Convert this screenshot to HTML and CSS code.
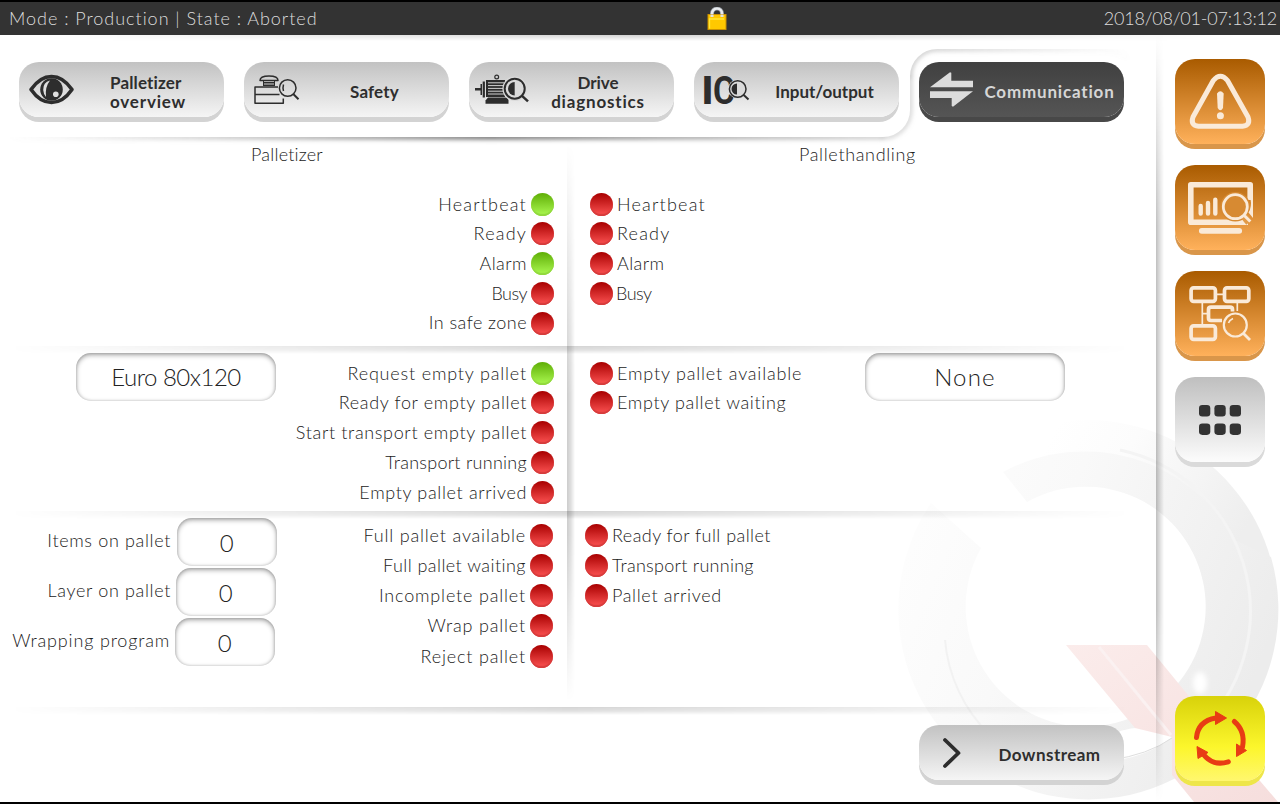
FILE: index.html
```html
<!DOCTYPE html>
<html lang="en">
<head>
<meta charset="utf-8">
<title>Palletizer – Communication</title>
<link rel="stylesheet" href="styles.css">
</head>
<body>
<div class="screen">
  <header class="status">
    <span class="status-mode">Mode : Production | State : Aborted</span>
    <svg class="lock" width="20" height="24" viewBox="0 0 20 24">
      <path d="M5 10V6.500a5 5 0 0 1 10 0V10" fill="none" stroke="#8a8f96" stroke-width="4"/>
      <path d="M5 10V6.500a5 5 0 0 1 10 0V10" fill="none" stroke="#e8ebee" stroke-width="2.600"/>
      <rect x=".5" y="7" width="19" height="16" fill="#c98f00"/>
      <rect x="1.500" y="8" width="17" height="14" fill="#ffc800"/>
      <path d="M2.500 21.500V12H17" fill="none" stroke="#ffe83a" stroke-width="1.300"/>
      <path d="M5 10V7.500M15 10V7.500" stroke="#dfe3e6" stroke-width="3"/>
    </svg>
    <time class="status-time">2018/08/01-07:13:12</time>
  </header>

  <svg class="watermark" viewBox="890 410 390 392" width="390" height="392">
    <defs>
      <linearGradient id="ring" gradientUnits="userSpaceOnUse" x1="930" y1="500" x2="1270" y2="640">
        <stop offset="0" stop-color="#fdfdfd"/><stop offset=".35" stop-color="#f9f9f9"/><stop offset="1" stop-color="#ececec"/>
      </linearGradient>
      <linearGradient id="halo" gradientUnits="userSpaceOnUse" x1="1060" y1="420" x2="1250" y2="520">
        <stop offset="0" stop-color="#fff"/><stop offset=".35" stop-color="#fcfcfc"/><stop offset="1" stop-color="#eee"/>
      </linearGradient>
      <linearGradient id="tail" x1="0" y1="0" x2="1" y2="1">
        <stop offset="0" stop-color="#fbeceb"/><stop offset="1" stop-color="#f6dedd"/>
      </linearGradient>
      <filter id="glow" x="-50%" y="-50%" width="200%" height="200%"><feGaussianBlur stdDeviation="2.500"/></filter>
    </defs>
    <path d="M1005 439A190 190 0 0 1 1271 560L1203 580A120 120 0 0 0 1027 502Z" fill="url(#halo)"/>
    <path d="M1003 472A172 172 0 0 1 1235 540L1271 557A190 190 0 1 1 931 503L981 548A120 120 0 1 0 1027 502Z" fill="url(#ring)"/>
    <path d="M1120 450A165 165 0 0 1 1205 725" fill="none" stroke="#f4f4f4" stroke-width="3"/>
    <path d="M945 640A150 150 0 0 0 990 735" fill="none" stroke="#f2f2f2" stroke-width="2"/>
    <path d="M1120 731Q1150 722 1172 737Q1150 755 1118 760Z" fill="#fff"/>
    <path d="M1110 760Q1148 755 1172 738" fill="none" stroke="#dedede"/>
    <ellipse cx="1200" cy="683" rx="7" ry="11" fill="#fff" filter="url(#glow)"/>
    <path d="M1066 645H1147L1215 728L1278 802H1194L1172 775V737L1135 728Z" fill="url(#tail)"/>
    <path d="M1099 647L1171 735" stroke="#fbf1f1" stroke-width="3"/>
  </svg>

  <div class="body">
    <main class="content">
      <svg class="tabline" width="1156" height="120" viewBox="0 35 1156 120">
        <defs>
          <linearGradient id="fadeL" gradientUnits="userSpaceOnUse" x1="10" y1="0" x2="884" y2="0">
            <stop offset="0" stop-color="#999" stop-opacity="0"/><stop offset=".55" stop-color="#666" stop-opacity=".95"/><stop offset="1" stop-color="#999" stop-opacity=".45"/>
          </linearGradient>
          <linearGradient id="fadeR" gradientUnits="userSpaceOnUse" x1="905" y1="0" x2="1130" y2="0">
            <stop offset="0" stop-color="#999" stop-opacity=".5"/><stop offset="1" stop-color="#999" stop-opacity="0"/>
          </linearGradient>
          <filter id="soft" filterUnits="userSpaceOnUse" x="0" y="30" width="1156" height="130"><feGaussianBlur stdDeviation="2"/></filter>
          <clipPath id="under"><path d="M0 137H883A27 27 0 0 0 910 110V76A27 27 0 0 1 937 49H1156V160H0Z"/></clipPath>
        </defs>
        <g clip-path="url(#under)">
          <g fill="none" stroke-width="5" filter="url(#soft)">
            <path d="M10 137H883V137.010" stroke="url(#fadeL)"/>
            <path d="M881 137A27 27 0 0 0 910 110V76" stroke="#aaa" stroke-opacity=".45"/>
            <path d="M910 78A27 27 0 0 1 937 49H1100Q1125 50 1134 66" stroke="url(#fadeR)"/>
          </g>
        </g>
      </svg>

      <nav class="tabs">
        <button class="btn"><svg class="ico" width="56" height="55" viewBox="0 0 56 55">
          <path d="M12 27.500Q21 14.500 32.500 14.500T53 27.500Q44 40.500 32.500 40.500T12 27.500Z" fill="none" stroke="#2d2d2d" stroke-width="3.600" stroke-linejoin="round"/>
          <circle cx="32.500" cy="27.500" r="11.300" fill="#2d2d2d"/>
          <path d="M31 18.500Q24 20 24.200 28Q24.400 32 27 35Q25.800 25 31 18.500Z" fill="#dedede"/>
          <circle cx="36.800" cy="32.300" r="2.800" fill="#dedede"/></svg>
          <span class="cap cap-left">Palletizer<br><span class="sp-l">overview</span></span></button>
        <button class="btn"><svg class="ico" width="56" height="55" viewBox="0 0 56 55" fill="none" stroke="#2d2d2d" stroke-width="1.500">
          <path d="M16 18.500Q16 14 25 14T34 18.500Z" stroke-linejoin="round"/>
          <path d="M19.500 19V24M30.500 19V24" stroke-width="1"/><path d="M19 20.800H31M20 23.300H30" stroke-width="1.500"/>
          <path d="M34 25H11V32.500H35.500M11 32.500V41.300H39.300V36.500" stroke-linejoin="round"/>
          <circle cx="43.700" cy="26" r="8.300"/><path d="M39.500 22.500Q38.500 26 39.500 29"/>
          <path d="M49.500 32.300L54.500 37.300" stroke-width="2"/></svg>
          <span class="cap sp-xs">Safety</span></button>
        <button class="btn"><svg class="ico" width="56" height="55" viewBox="0 0 56 55">
          <g fill="#2d2d2d"><rect x="6" y="26" width="7" height="2.500"/><rect x="11.500" y="22" width="1.500" height="11"/><rect x="13.700" y="19.500" width="2.200" height="16"/>
          <path d="M17 18H36V35H17Z"/><path d="M19 35.500H38L39.500 38V41.700H16.500V38.500Z"/></g>
          <path d="M19 20.800H35M19 23.600H35M19 26.400H35M19 29.200H35M19 32H35" stroke="#d2d2d2" stroke-width="1"/>
          <circle cx="27.700" cy="15" r="1.900" fill="none" stroke="#2d2d2d" stroke-width="1.200"/>
          <circle cx="45.700" cy="26.700" r="12.300" fill="#dadada"/>
          <circle cx="45.700" cy="26.700" r="10" fill="none" stroke="#2d2d2d" stroke-width="2"/>
          <path d="M45.700 20A6.700 6.700 0 0 0 45.700 33.400Z" fill="#2d2d2d"/>
          <path d="M53 33.800L59 39.300" stroke="#2d2d2d" stroke-width="2.500"/></svg>
          <span class="cap cap-drive">Drive<br><span class="sp-l">diagnostics</span></span></button>
        <button class="btn"><svg class="ico" width="56" height="55" viewBox="0 0 56 55">
          <g class="io"><text x="7" y="41.700" textLength="13" lengthAdjust="spacingAndGlyphs">I</text><text x="19" y="41.700" textLength="22" lengthAdjust="spacingAndGlyphs">C</text></g>
          <circle cx="43.700" cy="27" r="9.700" fill="#dadada"/>
          <circle cx="43.700" cy="27" r="8.300" fill="none" stroke="#2d2d2d" stroke-width="1.500"/>
          <path d="M43 21.500A5.500 5.500 0 0 0 43 32.500Z" fill="#2d2d2d"/>
          <path d="M49.700 33L54.500 37.500" stroke="#2d2d2d" stroke-width="2"/></svg>
          <span class="cap">Input/output</span></button>
        <button class="btn btn-active"><svg class="ico" width="56" height="55" viewBox="0 0 56 55" fill="#dcdcdc">
          <path d="M11 25.300L31 10.200L32.300 10.700V18.700H54V25.300Z"/><path d="M11 29.200H54L34 44.800L32.700 44V36H11Z"/></svg>
          <span class="cap sp-l">Communication</span></button>
      </nav>

      <section class="zone zone-state">
        <div class="half half-left">
          <h2 class="title sp-xs">Palletizer</h2>
          <ul class="leds leds-left">
            <li><span class="sp-xl">Heartbeat</span><i class="led led-on"></i></li>
            <li><span class="sp-xl">Ready</span><i class="led"></i></li>
            <li><span class="sp-m">Alarm</span><i class="led led-on"></i></li>
            <li><span class="sp-neg">Busy</span><i class="led"></i></li>
            <li class="raised"><span class="sp-m">In safe zone</span><i class="led"></i></li>
          </ul>
        </div>
        <div class="half half-right">
          <h2 class="title">Pallethandling</h2>
          <ul class="leds">
            <li><i class="led"></i><span class="sp-xl">Heartbeat</span></li>
            <li><i class="led"></i><span class="sp-xl">Ready</span></li>
            <li><i class="led"></i><span class="sp-m">Alarm</span></li>
            <li class="tight"><i class="led"></i><span class="sp-neg">Busy</span></li>
          </ul>
        </div>
      </section>

      <section class="zone zone-empty ruled">
        <div class="half half-left">
          <div class="field sp-neg">Euro 80x120</div>
          <ul class="leds leds-left">
            <li><span class="sp-l">Request empty pallet</span><i class="led led-on"></i></li>
            <li><span>Ready for empty pallet</span><i class="led"></i></li>
            <li><span>Start transport empty pallet</span><i class="led"></i></li>
            <li><span class="sp-s">Transport running</span><i class="led"></i></li>
            <li><span>Empty pallet arrived</span><i class="led"></i></li>
          </ul>
        </div>
        <div class="half half-right">
          <ul class="leds">
            <li><i class="led"></i><span class="sp-l">Empty pallet available</span></li>
            <li><i class="led"></i><span>Empty pallet waiting</span></li>
          </ul>
          <div class="field sp-xl">None</div>
        </div>
      </section>

      <section class="zone zone-full ruled">
        <div class="half half-left">
          <div class="counts">
            <label class="count count-a"><span>Items on pallet</span><output class="field">0</output></label>
            <label class="count count-b"><span>Layer on pallet</span><output class="field">0</output></label>
            <label class="count count-c"><span class="sp-l">Wrapping program</span><output class="field">0</output></label>
          </div>
          <ul class="leds leds-left">
            <li><span class="sp-l">Full pallet available</span><i class="led"></i></li>
            <li><span class="sp-m">Full pallet waiting</span><i class="led"></i></li>
            <li><span class="sp-l">Incomplete pallet</span><i class="led"></i></li>
            <li><span class="sp-l">Wrap pallet</span><i class="led"></i></li>
            <li><span class="sp-l">Reject pallet</span><i class="led"></i></li>
          </ul>
        </div>
        <div class="half half-right">
          <ul class="leds">
            <li><i class="led"></i><span class="sp-m">Ready for full pallet</span></li>
            <li><i class="led"></i><span class="sp-s">Transport running</span></li>
            <li><i class="led"></i><span>Pallet arrived</span></li>
          </ul>
        </div>
      </section>

      <footer class="foot ruled">
        <button class="btn"><svg class="ico" width="56" height="55" viewBox="0 0 56 55">
          <path d="M26 15L39.500 28L26 41" fill="none" stroke="#2d2d2d" stroke-width="3.800" stroke-linecap="round" stroke-linejoin="round"/></svg>
          <span class="cap sp-m">Downstream</span></button>
      </footer>
    </main>

    <aside class="side">
      <button class="tile tile-orange"><svg width="90" height="85" viewBox="0 0 90 85">
        <path d="M38.300 21.500Q45.400 13 52.500 21.500L73 58Q76 66.500 67.500 67.200H23.500Q15 66.500 18 58Z" fill="none" stroke="#faead8" stroke-width="5" stroke-linejoin="round"/>
        <path d="M42 34.500Q45.400 30 48.700 34.500L48 49Q45.400 53.500 42.700 49Z" fill="#faead8"/><circle cx="45.400" cy="56.700" r="3.500" fill="#faead8"/></svg></button>
      <button class="tile tile-orange"><svg width="90" height="85" viewBox="0 0 90 85">
        <path d="M75.200 35V19.800H15.800V57.200H73" fill="none" stroke="#faead8" stroke-width="5.600" stroke-linejoin="round"/>
        <circle cx="60.300" cy="41.700" r="14.800" fill="#d78a32"/>
        <path d="M75.500 34Q77 42 73.500 47.500L78 53V34Z" fill="#faead8"/>
        <path d="M25.700 41V48.500M33 38V48.500M40.300 34.700V48.500" stroke="#faead8" stroke-width="4.400" stroke-linecap="round"/>
        <path d="M26.800 65.800H64.200" stroke="#faead8" stroke-width="5.800" stroke-linecap="round"/>
        <path d="M68 50L74 57.500" stroke="#e29a46" stroke-width="7"/>
        <circle cx="60.300" cy="41.700" r="12" fill="none" stroke="#faead8" stroke-width="2.800"/>
        <path d="M69.500 50.800L75.300 56.500" stroke="#faead8" stroke-width="3"/></svg></button>
      <button class="tile tile-orange"><svg width="90" height="85" viewBox="0 0 90 85" fill="none" stroke="#faead8">
        <g stroke-width="3.700"><rect x="16.100" y="16.900" width="24.300" height="13.400" rx="2.500"/><rect x="49.500" y="16.900" width="24.300" height="13.400" rx="2.500"/>
        <path d="M57.500 40.500V38.500Q57.500 36.200 55 36.200H36Q33.500 36.200 33.500 38.500V47Q33.500 49.500 36 49.500H47"/>
        <rect x="16.100" y="54.900" width="24.300" height="13.400" rx="2.500"/></g>
        <path d="M42 23.300H48M27.300 32V53M62.300 32V40M27.300 42.700H32" stroke-width="1.700"/>
        <circle cx="60.300" cy="54" r="11.500" stroke-width="2.200"/><path d="M53.500 52Q54.500 49 58 47.500" stroke-width="1.600"/>
        <path d="M68.500 62.500L75 69" stroke-width="2.800"/></svg></button>
      <button class="tile tile-gray"><svg width="90" height="85" viewBox="0 0 90 85" fill="#333">
        <rect x="24" y="28" width="11.300" height="11.500" rx="3.300"/><rect x="39.400" y="28" width="11.300" height="11.500" rx="3.300"/><rect x="54.700" y="28" width="11.300" height="11.500" rx="3.300"/>
        <rect x="24" y="46.400" width="11.300" height="11.500" rx="3.300"/><rect x="39.400" y="46.400" width="11.300" height="11.500" rx="3.300"/><rect x="54.700" y="46.400" width="11.300" height="11.500" rx="3.300"/></svg></button>
      <button class="tile tile-yellow"><svg width="90" height="85" viewBox="0 0 90 85">
        <g fill="none" stroke="#e83c14" stroke-width="5" stroke-linecap="round"><path d="M21.500 41.500Q23 25 41 22"/><path d="M59.300 25.500Q70.500 35 67.500 51"/><path d="M53.300 65.800Q38 70.500 28.500 58.500"/></g>
        <g fill="#e83c14" stroke="#e83c14" stroke-linejoin="round"><path d="M40.500 15.500L51.500 22L40.500 28.500Z"/><path d="M61.500 48L71.500 54.500L61.500 60.500Z"/><path d="M22 50.500L33 56.500L23 62.500Z"/></g></svg></button>
    </aside>
  </div>
</div>
</body>
</html>
```
FILE: styles.css
```css
* { box-sizing: border-box; }
body {
  margin: 0;
  background: #fff;
  color: #222;
  font: 300 18px/23px Lato, "Liberation Sans", sans-serif;
  letter-spacing: .65px;
}
.screen {
  position: relative;
  width: 1280px;
  height: 804px;
  overflow: hidden;
  border-top: 2px solid #000;
  border-bottom: 2px solid #000;
  display: flex;
  flex-direction: column;
}
.status {
  height: 33px;
  flex: none;
  background: #333;
  color: #dcdcdc;
  display: grid;
  grid-template-columns: 698px 20px 1fr;
  align-items: center;
  padding: 0 3px 0 9px;
}
.status-mode { letter-spacing: .97px; }
.status-time { text-align: right; letter-spacing: -.2px; }
.watermark { position: absolute; right: 0; bottom: 0; }
.body {
  position: relative;
  flex: 1;
  display: flex;
}
.body::before {
  content: "";
  position: absolute;
  inset: 0 0 auto 0;
  height: 6px;
  background: linear-gradient(rgba(0,0,0,.18), rgba(0,0,0,0));
  mask-image: linear-gradient(90deg, transparent 3%, #000 50%, transparent 97%);
}
.content {
  position: relative;
  width: 1156px;
  display: flex;
  flex-direction: column;
}
.content::before {
  content: "";
  position: absolute;
  left: 567px;
  top: 110px;
  width: 8px;
  height: 556px;
  background: linear-gradient(90deg, rgba(0,0,0,.2), rgba(0,0,0,.12) 50%, rgba(0,0,0,0));
  mask-image: linear-gradient(transparent, #000 45%, #000 70%, transparent);
}
.tabline { position: absolute; left: 0; top: 0; }
.tabs {
  position: relative;
  height: 102px;
  padding: 27px 0 0 19px;
  display: flex;
  gap: 20px;
  align-items: flex-start;
}
button {
  border: 0;
  padding: 0;
  font: inherit;
  color: inherit;
}
.btn {
  width: 205px;
  height: 55px;
  border-radius: 20px;
  background: linear-gradient(#c2c2c2, #f5f5f5);
  box-shadow: 0 5px 0 #d3d3d3;
  display: flex;
  align-items: center;
  color: #2e2e2e;
  font-weight: 700;
  font-size: 17px;
  line-height: 19px;
  letter-spacing: 0;
}
.btn-active {
  background: linear-gradient(#404040, #555);
  box-shadow: 0 5px 0 #484848;
  color: #d6d6d6;
}
.ico { flex: none; overflow: visible; }
.io {
  font: 700 39px Roboto, sans-serif;
  fill: #2d2d2d;
}
.cap { flex: 1; text-align: center; padding-top: 4px; white-space: nowrap; }
.cap-left { text-align: left; padding-left: 35px; letter-spacing: .15px; }
.cap-drive { padding-right: 3px; }
.sp-xl { letter-spacing: 1.2px; }
.sp-l { letter-spacing: .82px; }
.sp-m { letter-spacing: .45px; }
.sp-s { letter-spacing: .27px; }
.sp-xs { letter-spacing: .2px; }
.sp-neg { letter-spacing: -.5px; }
.zone { position: relative; display: flex; }
.zone-state { height: 209px; }
.zone-empty { height: 165px; }
.zone-full { height: 196px; }
.ruled::before {
  content: "";
  position: absolute;
  left: 8px;
  right: 24px;
  top: 0;
  height: 8px;
  background: linear-gradient(rgba(0,0,0,.17), rgba(0,0,0,.12) 50%, rgba(0,0,0,0));
  mask-image: linear-gradient(90deg, transparent, #000 50%, transparent);
}
.half { position: relative; display: flex; justify-content: space-between; align-items: flex-start; }
.half-left { width: 567px; padding-right: 13px; }
.half-right { flex: 1; padding-left: 23px; }
.zone-state .half { flex-direction: column; justify-content: flex-start; }
.zone-state .half-left { align-items: flex-end; }
.title {
  margin: 6px 0 27px;
  font-size: 18px;
  font-weight: 300;
  height: 23px;
}
.half-left .title { align-self: center; padding-left: 20px; }
.half-right .title { padding-left: 209px; }
.leds {
  list-style: none;
  margin: 0;
  padding: 0;
  display: grid;
  grid-template-rows: 29px 30px 30px 30px 23px;
  align-items: start;
}
.leds li { display: flex; gap: 4px; height: 23px; white-space: nowrap; }
.leds .tight { gap: 3px; }
.leds-left li { justify-content: flex-end; }
.raised span { margin-top: -1px; }
.led {
  flex: none;
  width: 23px;
  height: 23px;
  border-radius: 50%;
  background: linear-gradient(#a80000, #f24848 86%);
  box-shadow: inset 0 -2px 1px #d63c3c;
}
.led-on {
  background: linear-gradient(#5fae06, #a2f048 86%);
  box-shadow: inset 0 -2px 1px #91d83e;
}
.field {
  width: 200px;
  height: 48px;
  border-radius: 15px;
  background: #fff;
  box-shadow: inset 0 2px 5px rgba(0,0,0,.36), inset 0 0 3px rgba(0,0,0,.18);
  text-align: center;
  font-size: 24px;
  line-height: 50px;
}
.zone-empty .leds { margin-top: 16px; }
.zone-empty .field { margin-top: 7px; line-height: 48px; }
.zone-empty .half-left .field { margin-left: 76px; }
.zone-empty .half-right .field { margin-right: 91px; }
.zone-full .half-left { padding-right: 14px; }
.zone-full .half-right { padding-left: 18px; }
.zone-full .leds { margin-top: 13px; grid-template-rows: 30px 30px 30px 31px 23px; }
.counts { padding-top: 7px; display: grid; gap: 2px; width: 277px; }
.count { display: flex; justify-content: flex-end; gap: 6px; }
.count span { padding-top: 11px; white-space: nowrap; }
.count .field { width: 100px; }
.count-b { padding-right: 1px; gap: 5px; }
.count-c { padding-right: 2px; gap: 5px; }
.foot { position: relative; height: 95px; padding: 18px 32px 0 0; display: flex; justify-content: flex-end; align-items: flex-start; }
.side {
  position: relative;
  width: 124px;
  padding: 24px 0 21px 19px;
  display: flex;
  flex-direction: column;
  gap: 21px;
}
.side::before {
  content: "";
  position: absolute;
  left: 0;
  top: 0;
  bottom: 0;
  width: 8px;
  background: linear-gradient(90deg, rgba(0,0,0,.25), rgba(0,0,0,.12) 50%, rgba(0,0,0,0));
  mask-image: linear-gradient(transparent, #000 25%, #000 75%, transparent);
}
.tile { width: 90px; height: 85px; border-radius: 20px; }
.tile svg { display: block; }
.tile-orange { background: linear-gradient(#a95b00, #ffb15b); box-shadow: 0 5px 0 #d9964a; }
.tile-gray { background: linear-gradient(#bfbfbf, #fcfcfc); box-shadow: 0 5px 0 #dadada; }
.tile-yellow {
  margin-top: auto;
  background: linear-gradient(#d8d20a, #fcf62c 60%, #fff76e);
  box-shadow: 0 5px 0 #eee64a;
}
```
